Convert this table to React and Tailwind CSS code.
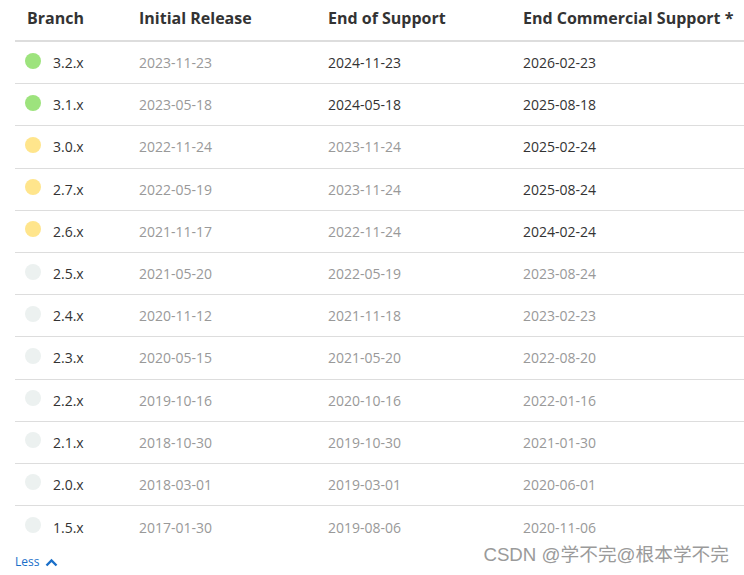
const rows = [
  { branch: '3.2.x', status: 'green', initial: '2023-11-23', eos: ['2024-11-23', true], ecs: ['2026-02-23', true] },
  { branch: '3.1.x', status: 'green', initial: '2023-05-18', eos: ['2024-05-18', true], ecs: ['2025-08-18', true] },
  { branch: '3.0.x', status: 'yellow', initial: '2022-11-24', eos: ['2023-11-24', false], ecs: ['2025-02-24', true] },
  { branch: '2.7.x', status: 'yellow', initial: '2022-05-19', eos: ['2023-11-24', false], ecs: ['2025-08-24', true] },
  { branch: '2.6.x', status: 'yellow', initial: '2021-11-17', eos: ['2022-11-24', false], ecs: ['2024-02-24', true] },
  { branch: '2.5.x', status: 'gray', initial: '2021-05-20', eos: ['2022-05-19', false], ecs: ['2023-08-24', false] },
  { branch: '2.4.x', status: 'gray', initial: '2020-11-12', eos: ['2021-11-18', false], ecs: ['2023-02-23', false] },
  { branch: '2.3.x', status: 'gray', initial: '2020-05-15', eos: ['2021-05-20', false], ecs: ['2022-08-20', false] },
  { branch: '2.2.x', status: 'gray', initial: '2019-10-16', eos: ['2020-10-16', false], ecs: ['2022-01-16', false] },
  { branch: '2.1.x', status: 'gray', initial: '2018-10-30', eos: ['2019-10-30', false], ecs: ['2021-01-30', false] },
  { branch: '2.0.x', status: 'gray', initial: '2018-03-01', eos: ['2019-03-01', false], ecs: ['2020-06-01', false] },
  { branch: '1.5.x', status: 'gray', initial: '2017-01-30', eos: ['2019-08-06', false], ecs: ['2020-11-06', false] },
];

const dotColors = {
  green: 'bg-[#9de37d]',
  yellow: 'bg-[#ffe58c]',
  gray: 'bg-[#ecf1f0]',
};

function DateCell({ value }) {
  const [date, active] = value;
  return <div className={`px-3 ${active ? 'text-[#333]' : 'text-[#999]'}`}>{date}</div>;
}

export default function App() {
  return (
    <div
      className="relative w-[744px] h-[575px] overflow-hidden bg-white pl-[15px]"
      style={{ fontFamily: '"Open Sans", "Noto Sans", sans-serif' }}
    >
      {/* Header */}
      <div className="grid grid-cols-[112px_189px_195px_1fr] h-[42px] items-center border-b-2 border-[#dddddd] text-[16px] font-bold text-[#333] pb-[4px]">
        <div className="px-3">Branch</div>
        <div className="px-3">Initial Release</div>
        <div className="px-3">End of Support</div>
        <div className="px-3 whitespace-nowrap">End Commercial Support *</div>
      </div>

      {/* Rows */}
      {rows.map((r, i) => (
        <div
          key={r.branch}
          className={`grid grid-cols-[112px_189px_195px_1fr] h-[42.2px] items-center text-[14px] ${
            i < rows.length - 1 ? 'border-b border-[#dddddd]' : ''
          }`}
        >
          <div className="flex items-center gap-3 px-[10px]">
            <span className={`w-4 h-4 rounded-full -mt-[4px] ${dotColors[r.status]}`} />
            <span className="text-[#333]">{r.branch}</span>
          </div>
          <div className="px-3 text-[#999]">{r.initial}</div>
          <DateCell value={r.eos} />
          <DateCell value={r.ecs} />
        </div>
      ))}

      {/* Less link */}
      <div className="flex items-center gap-[6px] mt-[5px] text-[12px] text-[#1a6fc9]">
        <span>Less</span>
        <svg width="13" height="9" viewBox="0 0 13 9" fill="none">
          <path d="M1.5 7.5L6.5 2.5L11.5 7.5" stroke="#1a6fc9" strokeWidth="2.4" />
        </svg>
      </div>

      {/* Watermark */}
      <div
        className="absolute right-[15px] bottom-[6px] text-[18.7px] text-[#9a9a9a]"
        style={{ fontFamily: '"Liberation Sans", "Noto Sans CJK SC", sans-serif', textShadow: '0 0 2px #fff' }}
      >
        CSDN @学不完@根本学不完
      </div>
    </div>
  );
}
